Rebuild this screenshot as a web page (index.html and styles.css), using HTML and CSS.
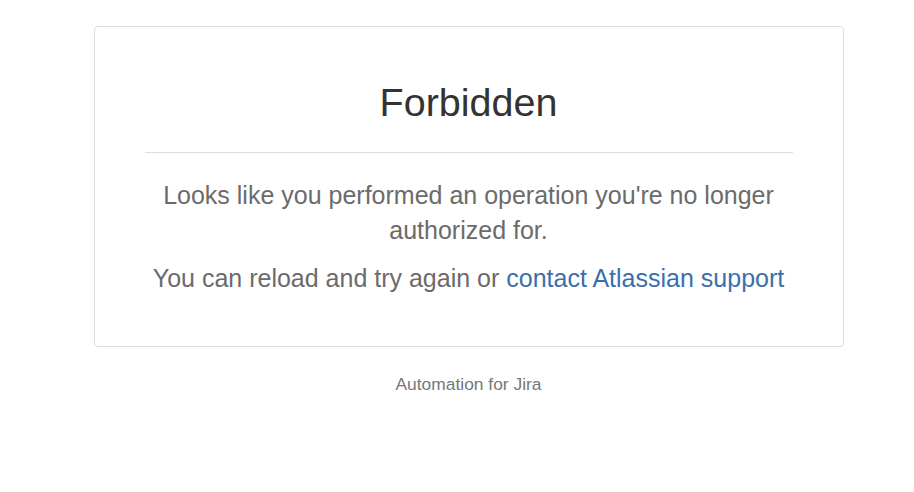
FILE: index.html
```html
<!doctype html>
<html lang="en-US">
  <head>
    <meta charset="utf-8">
    <meta name="viewport" content="width=device-width, initial-scale=1">
    <title>Forbidden</title>
    <link rel="stylesheet" href="styles.css">
  </head>
  <body>
    <div class="container">
      <div class="panel">
        <h1>Forbidden</h1>
        <hr>
        <p class="lead">Looks like you performed an operation you're no longer authorized for.</p>
        <p class="lead">You can reload and try again or <a href="#">contact Atlassian support</a></p>
      </div>
      <p class="footer">Automation for Jira</p>
    </div>
  </body>
</html>
```

FILE: styles.css
```css
body {
  color: #333;
  font-family: "Liberation Sans", Arial, sans-serif;
  margin: 0;
  padding: 0 0 0 23px;
}
.container {
  margin: 0 auto;
  padding-top: 26px;
  width: 750px;
}
.panel {
  border: 1px solid #ddd;
  border-radius: 4px;
  padding: 0 50px 50px;
  text-align: center;
}
h1 {
  font-size: 39.5px;
  font-weight: 400;
  line-height: 1.1;
  margin: 54px 0 0;
}
hr {
  border: 0;
  border-top: 1px solid #ddd;
  margin: 28px 0 25px;
}
.lead {
  color: #6b6b6b;
  font-size: 25px;
  line-height: 35px;
  margin: 0 0 13px;
}
.lead:last-child {
  margin-bottom: 0;
}
.lead a {
  color: #3a70a9;
  text-decoration: none;
}
.footer {
  color: #777;
  font-size: 17.4px;
  margin: 27px 0 0;
  text-align: center;
}
```
